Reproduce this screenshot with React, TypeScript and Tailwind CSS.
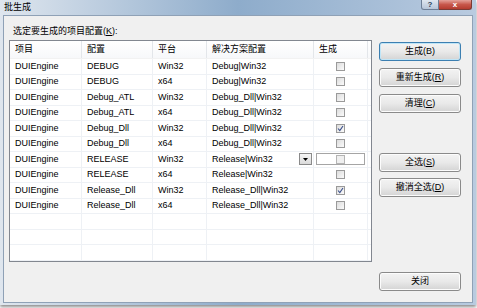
import React from "react";

const rows: [string, string, string, string, boolean][] = [
  ["DUIEngine", "DEBUG", "Win32", "Debug|Win32", false],
  ["DUIEngine", "DEBUG", "x64", "Debug|Win32", false],
  ["DUIEngine", "Debug_ATL", "Win32", "Debug_Dll|Win32", false],
  ["DUIEngine", "Debug_ATL", "x64", "Debug_Dll|Win32", false],
  ["DUIEngine", "Debug_Dll", "Win32", "Debug_Dll|Win32", true],
  ["DUIEngine", "Debug_Dll", "x64", "Debug_Dll|Win32", false],
  ["DUIEngine", "RELEASE", "Win32", "Release|Win32", false],
  ["DUIEngine", "RELEASE", "x64", "Release|Win32", false],
  ["DUIEngine", "Release_Dll", "Win32", "Release_Dll|Win32", true],
  ["DUIEngine", "Release_Dll", "x64", "Release_Dll|Win32", false],
];

function Check({ checked, dim }: { checked: boolean; dim?: boolean }) {
  return (
    <div
      className={
        "w-[9px] h-[9px] border flex items-center justify-center " +
        (dim
          ? "border-[#b4b4b4] bg-[#efefef]"
          : "border-[#9a9a9a] bg-gradient-to-br from-[#dcdcdc] to-[#fbfbfb]")
      }
    >
      {checked && (
        <svg width="7" height="7" viewBox="0 0 7 7">
          <path d="M1 3.5 L2.8 5.5 L6 1" fill="none" stroke="#3a4f8a" strokeWidth="1.1" />
        </svg>
      )}
    </div>
  );
}

function Btn({ children, def }: { children: React.ReactNode; def?: boolean }) {
  return (
    <div
      className={
        "w-[82px] h-[19px] rounded-[3px] border flex items-center justify-center text-[9px] text-black bg-gradient-to-b from-[#f3f3f3] via-[#e9e9e9] to-[#d4d4d4] " +
        (def
          ? "border-[#3c7fb1] shadow-[inset_0_0_0_1px_#bfe5f7]"
          : "border-[#8a8a8a] shadow-[inset_0_0_0_1px_#fcfcfc]")
      }
    >
      {children}
    </div>
  );
}

const colW = ["w-[72px]", "w-[71px]", "w-[54px]", "w-[107px]", "w-[54px]"];

export default function App() {
  return (
    <div className="w-[477px] h-[308px] bg-white overflow-hidden font-['Liberation_Sans','Noto_Sans_CJK_SC',sans-serif]">
      <div className="w-[476px] h-[305px] flex flex-col px-[3px] pb-[2px] bg-gradient-to-r from-[#dfe6ee] via-[#8eaccb] to-[#b9cbe0] shadow-[0_2px_3px_rgba(0,0,0,0.45)]">
        {/* title bar */}
        <div className="h-[15px] flex items-start relative">
          <div className="text-[9px] leading-[9px] mt-[3px] ml-[1px] text-black">批生成</div>
          <div className="ml-auto flex h-[10px] mr-[1px]">
            <div className="w-[18px] h-[10px] rounded-bl-[3px] border border-t-0 border-[#6d7f96] bg-gradient-to-b from-[#dfe7f0] to-[#b6c5d8] flex items-center justify-center text-[8px] leading-[8px] font-bold text-[#2d3f57]">
              ?
            </div>
            <div className="w-[33px] h-[10px] rounded-br-[3px] border border-t-0 border-l-0 border-[#7a3a34] bg-gradient-to-b from-[#e3a19a] via-[#c7574b] to-[#b43b2f] flex items-center justify-center text-[8px] leading-[8px] font-bold text-white">
              x
            </div>
          </div>
        </div>
        {/* client */}
        <div className="flex-1 bg-[#f0f0f0] border border-[#8fa1b6] flex text-[9px] text-black">
          <div className="pl-[5px] pt-[9px] flex flex-col">
            <div className="h-[12px] leading-[12px] ml-[4px]">
              选定要生成的项目配置(<span className="underline">K</span>):
            </div>
            <div className="mt-[3px] w-[363px] h-[222px] border border-[#828790] bg-white overflow-hidden">
              <div className="h-[18px] flex border-b border-[#f2f2f2] bg-gradient-to-b from-white to-[#f7f8fa]">
                {["项目", "配置", "平台", "解决方案配置", "生成"].map((h, i) => (
                  <div
                    key={i}
                    className={colW[i] + " h-full border-r border-[#e3e6ea] pl-[5px] flex items-center"}
                  >
                    {h}
                  </div>
                ))}
              </div>
              {rows.map((r, idx) => {
                const editing = idx === 6;
                return (
                  <div key={idx} className="h-[15.5px] flex border-b border-[#eef1f5]">
                    <div className={colW[0] + " h-full border-r border-[#eef1f5] pl-[5px] flex items-center"}>{r[0]}</div>
                    <div className={colW[1] + " h-full border-r border-[#eef1f5] pl-[5px] flex items-center"}>{r[1]}</div>
                    <div className={colW[2] + " h-full border-r border-[#eef1f5] pl-[5px] flex items-center"}>{r[2]}</div>
                    <div className={colW[3] + " h-full border-r border-[#eef1f5] pl-[5px] flex items-center"}>
                      <span>{r[3]}</span>
                      {editing && (
                        <div className="ml-auto mr-[1px] w-[13px] h-[12px] border border-[#8a8a8a] bg-gradient-to-b from-[#f6f6f6] to-[#dadada] flex items-center justify-center">
                          <svg width="5" height="3" viewBox="0 0 5 3">
                            <path d="M0 0 H5 L2.5 3 Z" fill="#000" />
                          </svg>
                        </div>
                      )}
                    </div>
                    <div className={colW[4] + " h-full border-r border-[#eef1f5] flex items-center justify-center"}>
                      {editing ? (
                        <div className="w-[49px] h-[12px] ml-[-1px] border border-[#a5a5a5] bg-white flex items-center justify-center">
                          <Check checked={false} dim />
                        </div>
                      ) : (
                        <Check checked={r[4]} />
                      )}
                    </div>
                  </div>
                );
              })}
              {[0, 1, 2].map((k) => (
                <div key={"e" + k} className="h-[15.5px] flex border-b border-[#eef1f5]">
                  {colW.map((w, i) => (
                    <div key={i} className={w + " h-full border-r border-[#eef1f5]"} />
                  ))}
                </div>
              ))}
            </div>
          </div>
          <div className="ml-[7px] pt-[26px] pb-[11px] flex flex-col">
            <Btn def>生成(B)</Btn>
            <div className="mt-[7px]">
              <Btn>
                重新生成(<span className="underline">R</span>)
              </Btn>
            </div>
            <div className="mt-[7px]">
              <Btn>
                清理(<span className="underline">C</span>)
              </Btn>
            </div>
            <div className="mt-[40px]">
              <Btn>
                全选(<span className="underline">S</span>)
              </Btn>
            </div>
            <div className="mt-[6px]">
              <Btn>
                撤消全选(<span className="underline">D</span>)
              </Btn>
            </div>
            <div className="mt-auto">
              <Btn>关闭</Btn>
            </div>
          </div>
        </div>
      </div>
    </div>
  );
}
